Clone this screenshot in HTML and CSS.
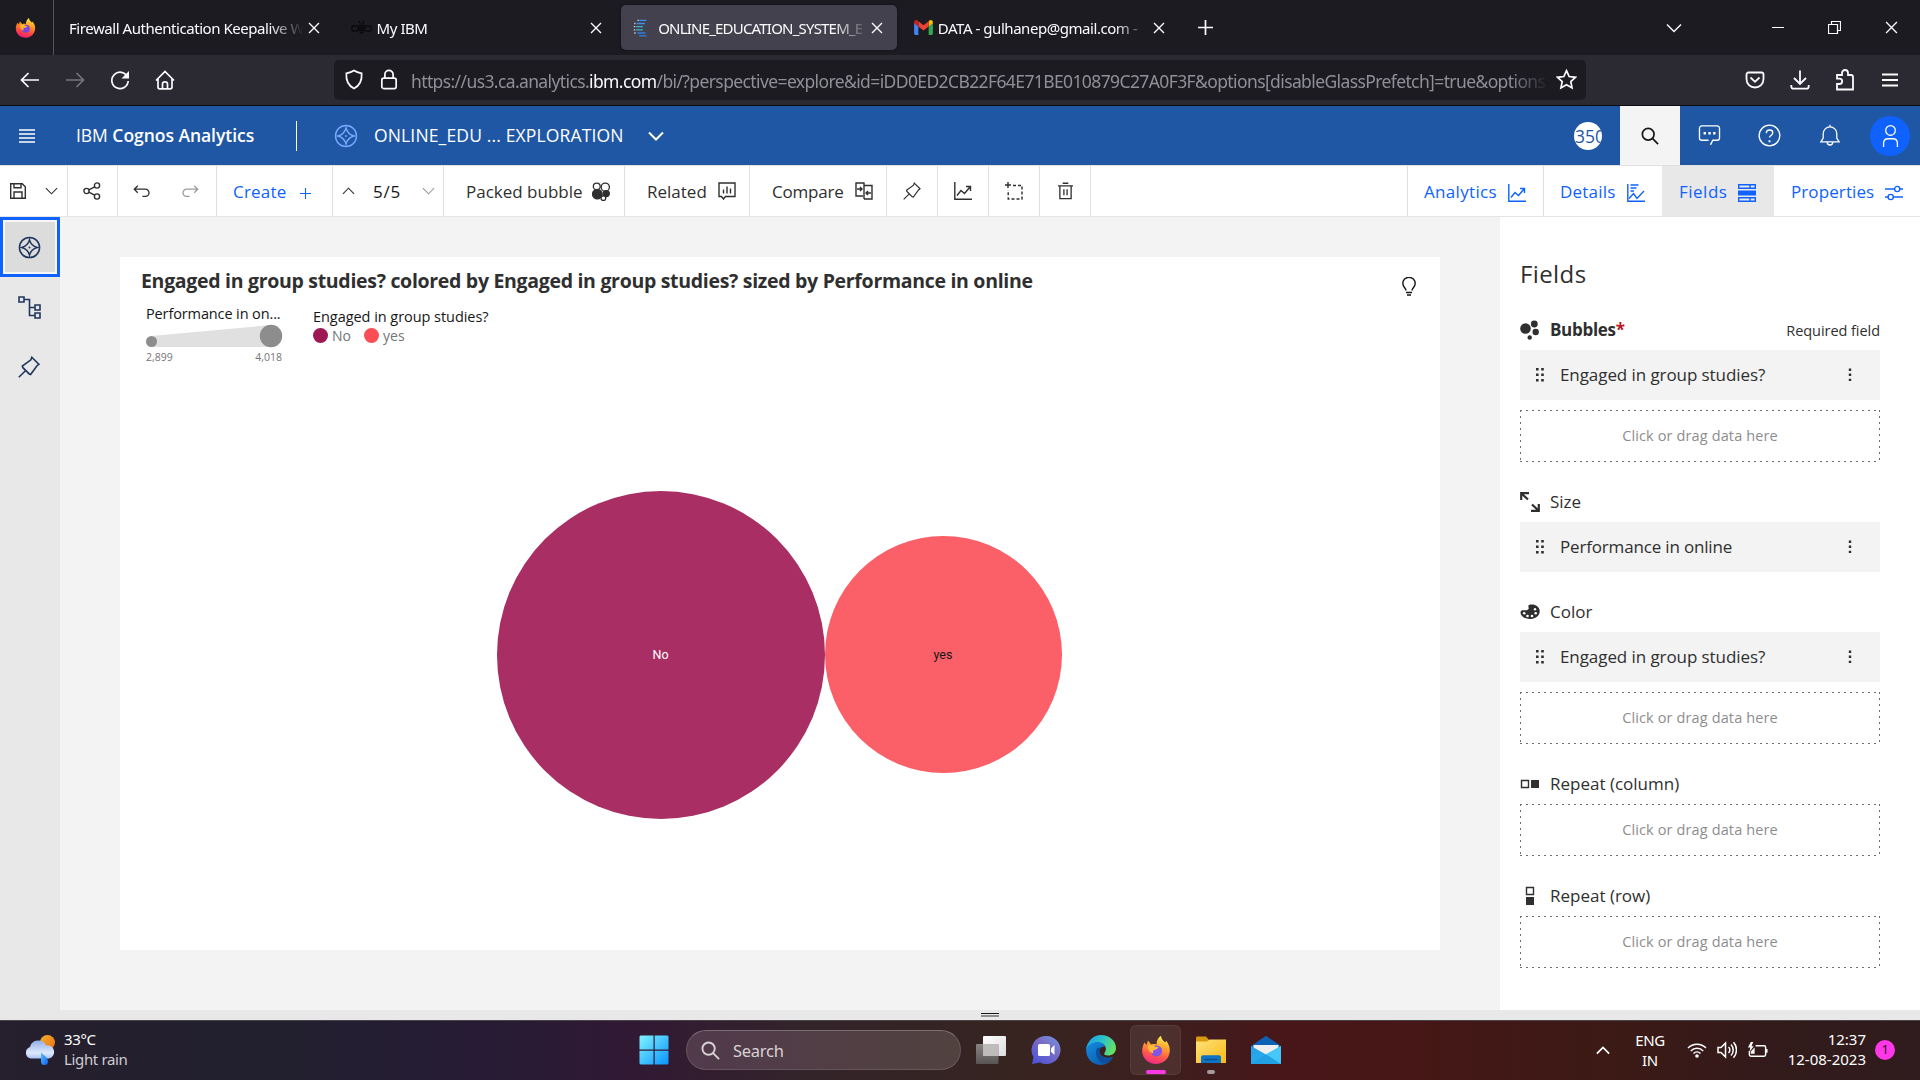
FILE: index.html
```html
<!DOCTYPE html>
<html lang="en">
<head>
<meta charset="utf-8">
<title>IBM Cognos Analytics</title>
<link rel="stylesheet" href="styles.css">
</head>
<body>
<svg class="defs" width="0" height="0" aria-hidden="true">
  <defs>
    <linearGradient id="g-ff" x1=".7" y1="0" x2=".4" y2="1"><stop offset="0" stop-color="#fff04a"/><stop offset=".35" stop-color="#ffa01e"/><stop offset=".7" stop-color="#ff4a3d"/><stop offset="1" stop-color="#f0187c"/></linearGradient>
    <radialGradient id="g-ffc"><stop offset="0" stop-color="#8a3cf0"/><stop offset="1" stop-color="#6a4ae0"/></radialGradient>
    <linearGradient id="g-win" x1="0" y1="0" x2="1" y2="1"><stop offset="0" stop-color="#7ff4ff"/><stop offset="1" stop-color="#0a93ff"/></linearGradient>
    <linearGradient id="g-chat" x1="1" y1="0" x2=".2" y2="1"><stop offset="0" stop-color="#6f9bea"/><stop offset=".45" stop-color="#7a6cc4"/><stop offset="1" stop-color="#4e55d8"/></linearGradient>
    <linearGradient id="g-edge1" x1="0" y1=".3" x2="1" y2=".6"><stop offset="0" stop-color="#1ea0e6"/><stop offset=".5" stop-color="#2cc3c8"/><stop offset="1" stop-color="#6ae35a"/></linearGradient>
    <linearGradient id="g-edge2" x1="0" y1="0" x2="1" y2="1"><stop offset="0" stop-color="#128fe6"/><stop offset="1" stop-color="#0c4f9c"/></linearGradient>
    <linearGradient id="g-fold" x1="0" y1="0" x2="1" y2="1"><stop offset="0" stop-color="#ffe27a"/><stop offset="1" stop-color="#f9b916"/></linearGradient>
    <linearGradient id="g-mail" x1="0" y1="0" x2="1" y2="1"><stop offset="0" stop-color="#2aa0e8"/><stop offset="1" stop-color="#22b2f0"/></linearGradient>
    <linearGradient id="g-cloud" x1="0" y1="0" x2="0" y2="1"><stop offset="0" stop-color="#8fb0ee"/><stop offset=".7" stop-color="#dfe9fb"/><stop offset="1" stop-color="#a9c2f2"/></linearGradient>
    <linearGradient id="g-sun" x1="0" y1="0" x2="1" y2="1"><stop offset="0" stop-color="#f3b52c"/><stop offset="1" stop-color="#ee6a12"/></linearGradient>
    <linearGradient id="g-drop" x1="0" y1="0" x2="1" y2="1"><stop offset="0" stop-color="#5cc0ff"/><stop offset="1" stop-color="#0b62f0"/></linearGradient>
    <linearGradient id="g-tv1" x1="0" y1="0" x2="1" y2="1"><stop offset="0" stop-color="#fff"/><stop offset="1" stop-color="#dcdcdc"/></linearGradient>
    <linearGradient id="g-tv2" x1="0" y1="0" x2="0" y2="1"><stop offset="0" stop-color="#8e8c8b"/><stop offset="1" stop-color="#5a5857"/></linearGradient>
  </defs>
  <symbol id="firefox" viewBox="0 0 30 30"><path fill="url(#g-ff)" d="M3.500 7.500 5.600 10 7 5.600l3.200 3.800c1.800-.6 3.800-.5 5.300 0C15.600 5.500 17.300 2.400 20 .8c.2 3 2 4.700 4 6.500.7-.3 1-.8 1.200-1.500 3.500 4.600 4.600 9.200 2.800 14.200-2 5.400-7 9-13 9C7 29 1.500 23 1.200 16.500 1 13 2 10 3.500 7.500Z"/><circle cx="15.500" cy="16" r="5.600" fill="url(#g-ffc)"/><path fill="#ffb52a" d="M7 11c2.500-1.600 5-1 7 .6 1.200.6 2.800.5 3.600.4-.8 2-2.600 2.600-4.400 3-1.800.4-1.400 2-.5 3.200C9 18 6.500 15 7 11Z"/></symbol>
  <symbol id="x" viewBox="0 0 12 12"><path d="m1 1 10 10M11 1 1 11"/></symbol>
  <symbol id="bee" viewBox="0 0 22 16"><g fill="none" stroke="#08080a" stroke-width="1.300"><ellipse cx="4" cy="9" rx="3.500" ry="3"/><ellipse cx="18" cy="9" rx="3.500" ry="3"/><path d="m8 1 2 3M14 1l-2 3"/><path stroke-width="1.800" d="M8 6h6M7.500 8.500h7M8 11h6M9 13.500h4"/></g></symbol>
  <symbol id="cog-fav" viewBox="0 0 16 20"><g stroke-width="1.500" fill="none"><path stroke="#3f8ff0" d="M6 1.500h8M3.500 5h9"/><path stroke="#35b6d8" d="M2.500 8.500H10M2.500 12H10"/><path stroke="#2f7fe0" d="M4 15.500h9M6 18.800h8"/><path stroke="#cfd6e6" stroke-dasharray="1.500 2.200" d="M4 1.500H6M.5 5h2.500M0 8.500h2M0 12h2M.5 15.500h2.500"/></g></symbol>
  <symbol id="gmail" viewBox="0 0 20 16"><path fill="#4285f4" d="M0 3v11.500c0 .8.6 1.500 1.400 1.500H4.500V7z"/><path fill="#34a853" d="M20 3v11.500c0 .8-.6 1.500-1.400 1.500H15.500V7z"/><path fill="#fbbc04" d="M15.500 1.200V7L20 3.500V2.300C20 .2 17.700-.6 16.300.6z"/><path fill="#ea4335" d="M4.500 7V1.200L10 5.500l5.500-4.300V7L10 11.300z"/><path fill="#c5221f" d="M0 2.300V3.500L4.500 7V1.200L3.700.6C2.300-.6 0 .2 0 2.300z"/></symbol>
  <symbol id="plus" viewBox="0 0 14 14"><path d="M7 0v14M0 7h14"/></symbol>
  <symbol id="chev" viewBox="0 0 16 10"><path d="m1 1.500 7 7 7-7"/></symbol>
  <symbol id="chevup" viewBox="0 0 16 10"><path d="m1 8.500 7-7 7 7"/></symbol>
  <symbol id="restore" viewBox="0 0 13 13"><path d="M.5 3.500h9v9h-9zM3.500 3.500v-3h9v9h-3"/></symbol>
  <symbol id="back" viewBox="0 0 20 16"><path d="M19 8H1.500M8.500 1l-7 7 7 7"/></symbol>
  <symbol id="fwd" viewBox="0 0 20 16"><path d="M1 8h17.500M11.500 1l7 7-7 7"/></symbol>
  <symbol id="reload" viewBox="0 0 20 20"><path d="M17.500 7A8.200 8.200 0 1 0 18.200 11"/><path fill="currentColor" stroke="none" d="M19 1v7.500h-7.500z"/></symbol>
  <symbol id="home" viewBox="0 0 20 20"><path d="M1 10.500 10 1.500l9 9M3 9v8c0 1 .6 1.800 1.800 1.800h10.400c1.200 0 1.800-.8 1.800-1.800V9M7.500 18.500V14c0-1.500 1-2.200 2.500-2.200s2.500.7 2.500 2.200v4.500"/></symbol>
  <symbol id="shield" viewBox="0 0 20 22"><path d="M10 1.500c2.500 1.700 5 2.400 8 3 .5 7-2 13-8 16-6-3-8.500-9-8-16 3-.6 5.500-1.300 8-3Z"/></symbol>
  <symbol id="lock" viewBox="0 0 18 22"><rect x="1.500" y="9.500" width="15" height="11" rx="2"/><path d="M4.700 9.500V5.800a4.300 4.300 0 0 1 8.600 0v3.700"/></symbol>
  <symbol id="star" viewBox="0 0 22 22"><path d="m11 1.800 2.800 6.100 6.600.8-4.900 4.500 1.300 6.600L11 16.500l-5.800 3.300 1.300-6.600L1.600 8.700l6.600-.8z"/></symbol>
  <symbol id="pocket" viewBox="0 0 20 18"><path d="M3.500 1.500h13c1.200 0 2 .8 2 2V8c0 5-3.800 8.500-8.500 8.500S1.500 13 1.500 8V3.500c0-1.200.8-2 2-2ZM5.500 6.500 10 10.800l4.500-4.300"/></symbol>
  <symbol id="download" viewBox="0 0 20 20"><path d="M10 .5v13M4 8l6 6 6-6M1.300 15v1.500c0 1.500.9 2.200 2.200 2.200h13c1.300 0 2.200-.7 2.200-2.200V15"/></symbol>
  <symbol id="puzzle" viewBox="0 0 20 22"><path d="M2 20.500V15h2.500a2.700 2.700 0 0 0 0-5.400H2V6h5V4a3 3 0 0 1 6 0v2h3c1.400 0 2 .8 2 2v12.500Z"/></symbol>
  <symbol id="burger3" viewBox="0 0 16 14"><path d="M0 1.500h16M0 7h16M0 12.500h16"/></symbol>
  <symbol id="burger4" viewBox="0 0 16 14"><path d="M0 1h16M0 5h16M0 9h16M0 13h16"/></symbol>
  <symbol id="compass" viewBox="0 0 24 24"><circle cx="12" cy="12" r="10.500"/><path d="M12 4c1.200 4.500 3.500 6.800 8 8-4.500 1.200-6.800 3.500-8 8-1.200-4.500-3.500-6.800-8-8 4.500-1.200 6.800-3.500 8-8Z"/><circle cx="12" cy="12" r="1" fill="currentColor" stroke="none"/></symbol>
  <symbol id="search" viewBox="0 0 20 20"><circle cx="8" cy="8" r="6.500"/><path d="m12.700 12.700 6.300 6.300"/></symbol>
  <symbol id="chat" viewBox="0 0 24 22"><path d="M13 20.800 15.500 16H20c1.500 0 2.500-1 2.500-2.500V3.500C22.500 2 21.500 1 20 1H4C2.500 1 1.500 2 1.500 3.500v10C1.500 15 2.500 16 4 16h7"/><path stroke-width="2.600" d="M5.800 8.700h2.500M10.800 8.700h2.500M15.800 8.700h2.500"/></symbol>
  <symbol id="help" viewBox="0 0 24 24"><circle cx="12" cy="12" r="10.800"/><path d="M8.700 9.600c0-2 1.400-3.300 3.400-3.300 1.900 0 3.300 1.200 3.300 2.900 0 2.700-3.400 2.700-3.400 5"/><path stroke-width="2" d="M12 17v2"/></symbol>
  <symbol id="bell" viewBox="0 0 24 26"><path d="M12 3.200V.8M2 19.500h20l-2.600-4.200V10.500a7.400 7.400 0 0 0-14.800 0v4.800zM9 19.800a3 3 0 0 0 6 0"/></symbol>
  <symbol id="user" viewBox="0 0 18 26"><circle cx="9" cy="7" r="5.200"/><path d="M1.500 25v-4c0-3 2-5 5-5h5c3 0 5 2 5 5v4"/></symbol>
  <symbol id="save" viewBox="0 0 16 16"><path d="M.7.7h11.500l3.100 3.100v11.500H.7zM4 .7v4h7v-4M4 15V9h8v6"/></symbol>
  <symbol id="share" viewBox="0 0 18 18"><circle cx="3.500" cy="9" r="2.600"/><circle cx="14" cy="3.500" r="2.600"/><circle cx="14" cy="14.500" r="2.600"/><path d="m5.800 7.800 5.900-3M5.800 10.200l5.900 3"/></symbol>
  <symbol id="undo" viewBox="0 0 18 14"><path d="M5 .8 1.200 4.500 5 8.300M1.200 4.500h12a3.600 3.600 0 0 1 0 7.800H10"/></symbol>
  <symbol id="redo" viewBox="0 0 18 14"><path d="m13 .8 3.800 3.700L13 8.300M16.800 4.500h-12a3.600 3.600 0 0 0 0 7.800H8"/></symbol>
  <symbol id="packed" viewBox="0 0 20 20"><circle cx="5" cy="4.700" r="3.600" fill="none"/><circle cx="14" cy="5.500" r="4.300" fill="none"/><circle cx="5.600" cy="12.800" r="5" fill="currentColor"/><circle cx="15" cy="12.200" r="3.200" fill="currentColor"/><circle cx="12" cy="17" r="2.500" fill="#fff"/></symbol>
  <symbol id="related" viewBox="0 0 18 18"><path d="M1 1h16v13.500H7.500L5.500 17l-2-2.500H1zM5.500 11.500v-4M9 11.500V4.500M12.500 11.500v-5"/></symbol>
  <symbol id="compare" viewBox="0 0 18 18"><path d="M8 14H1V1h8v16M9 3.500h8V17H9M2 7h5M5 5l2 2-2 2M16 11h-5M13 9l-2 2 2 2"/></symbol>
  <symbol id="pin" viewBox="0 0 22 22"><path d="m13.800 1.300 7 7-1.800 1.400-6.400 8.800-1.200-.4-6.500-6.500-.6-1.500 8.600-6.300zM8 14.200.8 21.300M4.300 11.200l7.300 7.300"/></symbol>
  <symbol id="line" viewBox="0 0 18 18"><path d="M.8 0v17.200H18M3 13.500 7 8.500l3.500 3 5.500-6.500M12 4.500h4.500V9"/></symbol>
  <symbol id="crop" viewBox="0 0 18 18"><path d="M3 0v6M0 3h6"/><path stroke-dasharray="3 2" d="M8 3.500h9v13.500H3.200V8"/></symbol>
  <symbol id="trash" viewBox="0 0 16 18"><path d="M0 3.500h16M2 3.500v13.700h12V3.500M5 .7h6M6.300 7v6.500M9.700 7v6.500"/></symbol>
  <symbol id="details" viewBox="0 0 18 18"><path d="M.8 0v17.200H18M2 14.500l4.500-5 3.500 5 7-7.500M3.500 1h8M3.500 4h6M3.500 7h3.500"/></symbol>
  <symbol id="fields" viewBox="0 0 18 18"><path d="M.7.7h16.600v3.600H.7zM.7 13.700h16.600v3.600H.7zM12 .7v3.600M12 13.700v3.600"/><path fill="currentColor" stroke="none" d="M0 6.500h18v5H0z"/></symbol>
  <symbol id="sliders" viewBox="0 0 18 16"><path d="M0 4h9.500M15 4h3M0 12h3M8.500 12H18"/><circle cx="12.200" cy="4" r="2.600"/><circle cx="5.700" cy="12" r="2.600"/></symbol>
  <symbol id="tree" viewBox="0 0 23 23"><path d="M1 1h5v5H1zM17 9h5v5h-5zM17 17h5v5h-5zM6 3.500h5.500v16H17M11.500 11.500H17"/></symbol>
  <symbol id="bulb" viewBox="0 0 14 19"><path d="M4 13.500c0-2.300-3.200-3.500-3.200-7a6.200 6.200 0 0 1 12.400 0c0 3.500-3.200 4.700-3.200 7M4 15.500h6M5 18h4"/></symbol>
  <symbol id="bubbles" viewBox="0 0 20 20"><g fill="currentColor" stroke="none"><circle cx="5.500" cy="8.500" r="5.300"/><circle cx="14.300" cy="4" r="3.400"/><circle cx="15.700" cy="12" r="3.200"/><circle cx="9.700" cy="17.500" r="2.200"/></g></symbol>
  <symbol id="size" viewBox="0 0 20 20"><path stroke-width="2.200" d="m1.500 1.500 6.500 6M1.200 8V1.200H9M18.500 18.500l-6.500-6M18.800 12v6.800H11"/></symbol>
  <symbol id="palette" viewBox="0 0 20 16"><path fill="currentColor" stroke="none" d="M9 1c5-1.500 10.500 1 10.700 6 .1 5-5 8-10 8C4.500 15 .5 12 .5 8.500c0-1.500.8-2.500 2.200-2.300C5 6.500 8 6.500 8.700 4.500 9 3.500 7.500 2 9 1Z"/><g fill="#fff" stroke="none"><circle cx="4.200" cy="9.300" r="1.300"/><circle cx="7.500" cy="12" r="1.300"/><circle cx="12" cy="12" r="1.300"/><circle cx="15.700" cy="9.300" r="1.300"/><circle cx="15" cy="5.300" r="1.200"/></g></symbol>
  <symbol id="repcol" viewBox="0 0 20 20"><path d="M1.500 6.500h7v7h-7z"/><path fill="currentColor" stroke="none" d="M11 6h8v8h-8z"/></symbol>
  <symbol id="reprow" viewBox="0 0 20 20"><path d="M6.500 1.500h7v7h-7z"/><path fill="currentColor" stroke="none" d="M6 11h8v8H6z"/></symbol>
  <symbol id="drag" viewBox="0 0 8 14"><path fill="currentColor" stroke="none" d="M0 0h2.600v2.600H0zM5.200 0h2.600v2.600H5.200zM0 5.500h2.600v2.600H0zM5.200 5.500h2.600v2.600H5.200zM0 11h2.600v2.600H0zM5.200 11h2.600v2.600H5.200z"/></symbol>
  <symbol id="kebab" viewBox="0 0 4 14"><path fill="currentColor" stroke="none" d="M.8.5h2.400v2.400H.8zM.8 5.600h2.400V8H.8zM.8 10.700h2.400v2.400H.8z"/></symbol>
  <symbol id="weather" viewBox="0 0 32 32"><circle cx="23.500" cy="8.500" r="7.500" fill="url(#g-sun)"/><path fill="url(#g-cloud)" d="M6.500 24.500A6 6 0 0 1 6 13a8.500 8.500 0 0 1 16-1.500 6.500 6.500 0 0 1 3 13z"/><path fill="url(#g-drop)" d="M17 18.500c3.500 3 7 5.500 7 9a3.500 3.500 0 0 1-7 0z"/></symbol>
  <symbol id="windows" viewBox="0 0 30 30"><path fill="url(#g-win)" d="M1.500.5h13v14h-14v-13zM15.700.5H28.500l1 1v13H15.700zM.5 15.700h14v13.800h-13l-1-1zM15.700 15.700h13.800v12.800l-1 1H15.700z"/></symbol>
  <symbol id="taskview" viewBox="0 0 30 30"><rect x="7" y="1" width="23" height="20" rx="1" fill="url(#g-tv1)"/><rect x="0" y="9" width="22.500" height="20" rx="1" fill="url(#g-tv2)" opacity=".93"/><path fill="#bdbcbb" d="M7 9h15.500v12H7z"/></symbol>
  <symbol id="meet" viewBox="0 0 30 30"><path fill="url(#g-chat)" d="M15.500 1A14 14 0 1 1 9 27.400L1 29l1.500-7A14 14 0 0 1 15.500 1Z"/><rect x="7" y="9" width="12" height="12" rx="1.500" fill="#fff"/><path fill="#fff" d="M20 13.500 23.500 10v10L20 16.700z"/></symbol>
  <symbol id="edge" viewBox="0 0 30 30"><path fill="url(#g-edge2)" d="M.2 15C.5 8 6 5 11 6c6 1.200 8 4 8 6-4-1-6 2-5.500 5 .6 4 5 7 13.500 5C24.500 27 20 30 15 30 6.500 30 0 23.500.2 15Z"/><path fill="#0d4f9d" d="M11 13c-2.500 6 0 13.500 7 15.500 4-.5 7.500-3.500 9-6.500-7 2.500-12.500.5-13.500-5-.3-2 .5-3.500 1.500-4.500z"/><path fill="url(#g-edge1)" d="M.2 14.500C1 6 7.500 0 15 0c8.500 0 15 6 15 13 0 5-4 7.500-8 7.500-2.500 0-4.200-1-3.700-2.300 1-2 2-2.700 1.500-5.200C18.500 5.500 5 4 .2 14.500Z"/></symbol>
  <symbol id="folder" viewBox="0 0 30 30"><path fill="#d79a0c" d="M0 3c0-1 .5-1.500 1.500-1.500H10L13 5v4H0z"/><path fill="url(#g-fold)" d="M0 6.500h11L13.500 4.500H30V28H0z"/><path fill="#0f73c4" d="M5 28v-5.500C5 21 6 20.300 7 20.300h16c1.200 0 2 .8 2 2.200V28z"/><path stroke="#0a4f8c" stroke-width="1.300" d="M8.500 24.500h13"/></symbol>
  <symbol id="mail" viewBox="0 0 30 30"><path fill="#0c62b4" d="M0 11 15 .8 30 11v3H0z"/><path fill="#efefef" d="M2.500 10h25v11h-25z"/><path fill="url(#g-mail)" d="M0 11l15 8.500L30 11v18H0z"/><path fill="#45c8f8" d="m15 19.500 15-8.500v18z"/><path fill="#1f93dc" d="m0 29 15-9.500L30 29z" opacity=".5"/></symbol>
  <symbol id="wifi" viewBox="0 0 20 16"><path d="M1 6a12.500 12.500 0 0 1 18 0M3.800 9a8.500 8.500 0 0 1 12.400 0M6.500 11.500a5 5 0 0 1 7 0"/><circle cx="10" cy="14" r="1.800" fill="currentColor" stroke="none"/></symbol>
  <symbol id="vol" viewBox="0 0 20 18"><path d="M1 6.500h3L8.500 2v14L4 11.500H1zM11.500 6a4 4 0 0 1 0 6M14 3.500a8 8 0 0 1 0 11M16.500 1.300a11.500 11.500 0 0 1 0 15.400"/></symbol>
  <symbol id="batt" viewBox="0 0 22 18"><path d="M9 4.500h9c1 0 1.500.5 1.500 1.500v8c0 1-.5 1.500-1.500 1.500H4c-1 0-1.500-.5-1.500-1.500V10"/><path fill="currentColor" stroke="none" d="M19.500 8H21.500v4h-2zM4 .5 1 6.500h2.500L2.500 11 7 5H4.700L6.500.5zM8 6.500V13H4v-2.500z"/></symbol>
</svg>

<div class="screen">
  <header class="tabs">
    <div class="tabs-fx"><svg width="21" height="22"><use href="#firefox"/></svg></div>
    <div class="tab"><span class="tab-text">Firewall Authentication Keepalive W</span><svg class="ic" width="12" height="12"><use href="#x"/></svg></div>
    <div class="tab"><svg width="21" height="15"><use href="#bee"/></svg><span class="tab-text">My IBM</span><svg class="ic" width="12" height="12"><use href="#x"/></svg></div>
    <div class="tab active"><svg width="16" height="18"><use href="#cog-fav"/></svg><span class="tab-text">ONLINE_EDUCATION_SYSTEM_E</span><svg class="ic" width="12" height="12"><use href="#x"/></svg></div>
    <div class="tab"><svg width="19" height="15"><use href="#gmail"/></svg><span class="tab-text">DATA - gulhanep@gmail.com -</span><svg class="ic" width="12" height="12"><use href="#x"/></svg></div>
    <svg class="ic newtab" width="15" height="15"><use href="#plus"/></svg>
    <div class="win">
      <span class="win-b list"><svg class="ic" width="16" height="10"><use href="#chev"/></svg></span>
      <span class="win-b"><i class="minimize"></i></span>
      <span class="win-b"><svg class="ic thin" width="13" height="13"><use href="#restore"/></svg></span>
      <span class="win-b"><svg class="ic thin" width="13" height="13"><use href="#x"/></svg></span>
    </div>
  </header>

  <nav class="nav">
    <svg class="ic" width="20" height="16"><use href="#back"/></svg>
    <svg class="ic dim" width="20" height="16"><use href="#fwd"/></svg>
    <svg class="ic" width="20" height="20"><use href="#reload"/></svg>
    <svg class="ic" width="20" height="20"><use href="#home"/></svg>
    <div class="url">
      <svg class="ic" width="20" height="21"><use href="#shield"/></svg>
      <svg class="ic lock" width="18" height="21"><use href="#lock"/></svg>
      <span class="url-text">https://us3.ca.analytics.<b>ibm.com</b>/bi/?perspective=explore&amp;id=iDD0ED2CB22F64E71BE010879C27A0F3F&amp;options[disableGlassPrefetch]=true&amp;options</span>
      <svg class="ic" width="21" height="21"><use href="#star"/></svg>
    </div>
    <div class="nav-right">
      <svg class="ic" width="20" height="18"><use href="#pocket"/></svg>
      <svg class="ic" width="20" height="20"><use href="#download"/></svg>
      <svg class="ic" width="20" height="22"><use href="#puzzle"/></svg>
      <svg class="ic last" width="16" height="14"><use href="#burger3"/></svg>
    </div>
  </nav>

  <div class="bar">
    <svg class="ic menu" width="16" height="14"><use href="#burger4"/></svg>
    <span class="brand">IBM <b>Cognos Analytics</b></span>
    <i class="bar-sep"></i>
    <svg class="ic logo" width="24" height="24"><use href="#compass"/></svg>
    <span class="doc">ONLINE_EDU ... EXPLORATION</span>
    <svg class="ic docchev" width="16" height="10"><use href="#chev"/></svg>
    <div class="bar-right">
      <span class="count">350</span>
      <span class="bar-b find"><svg class="ic" width="18" height="18"><use href="#search"/></svg></span>
      <span class="bar-b"><svg class="ic" width="23" height="21"><use href="#chat"/></svg></span>
      <span class="bar-b"><svg class="ic" width="23" height="23"><use href="#help"/></svg></span>
      <span class="bar-b"><svg class="ic" width="22" height="24"><use href="#bell"/></svg></span>
      <span class="bar-b me"><span class="avatar"><svg class="ic" width="17" height="24"><use href="#user"/></svg></span></span>
    </div>
  </div>

  <div class="tools">
    <div class="cell c-save"><svg class="ic" width="16" height="16"><use href="#save"/></svg><svg class="ic" width="13" height="8"><use href="#chev"/></svg></div>
    <div class="cell c-share"><svg class="ic" width="18" height="18"><use href="#share"/></svg></div>
    <div class="cell c-undo"><svg class="ic" width="17" height="13"><use href="#undo"/></svg><svg class="ic faint" width="17" height="13"><use href="#redo"/></svg></div>
    <div class="cell c-create blue"><span class="w-create">Create</span><svg class="ic" width="11" height="11"><use href="#plus"/></svg></div>
    <div class="cell c-page"><svg class="ic" width="13" height="8"><use href="#chevup"/></svg><span class="w-page">5/5</span><svg class="ic faint" width="13" height="8"><use href="#chev"/></svg></div>
    <div class="cell c-packed"><span class="w-packed">Packed bubble</span><svg class="ic" width="19" height="19"><use href="#packed"/></svg></div>
    <div class="cell c-related"><span class="w-related">Related</span><svg class="ic" width="18" height="18"><use href="#related"/></svg></div>
    <div class="cell c-compare"><span class="w-compare">Compare</span><svg class="ic" width="18" height="18"><use href="#compare"/></svg></div>
    <div class="cell c-icon"><svg class="ic" width="18" height="18"><use href="#pin"/></svg></div>
    <div class="cell c-icon"><svg class="ic" width="18" height="18"><use href="#line"/></svg></div>
    <div class="cell c-icon"><svg class="ic" width="18" height="18"><use href="#crop"/></svg></div>
    <div class="cell c-icon"><svg class="ic" width="15" height="18"><use href="#trash"/></svg></div>
    <div class="tools-right blue">
      <div class="cell r-analytics"><span class="w-analytics">Analytics</span><svg class="ic" width="18" height="18"><use href="#line"/></svg></div>
      <div class="cell r-details"><span class="w-details">Details</span><svg class="ic" width="18" height="18"><use href="#details"/></svg></div>
      <div class="cell r-fields"><span class="w-fields">Fields</span><svg class="ic" width="18" height="18"><use href="#fields"/></svg></div>
      <div class="cell r-props"><span class="w-props">Properties</span><svg class="ic" width="18" height="16"><use href="#sliders"/></svg></div>
    </div>
  </div>

  <main class="work">
    <aside class="rail">
      <div class="rail-b sel"><svg class="ic" width="23" height="23"><use href="#compass"/></svg></div>
      <div class="rail-b"><svg class="ic" width="23" height="23"><use href="#tree"/></svg></div>
      <div class="rail-b"><svg class="ic" width="22" height="22"><use href="#pin"/></svg></div>
    </aside>
    <section class="stage">
      <article class="card">
        <div class="card-head">
          <h1>Engaged in group studies? colored by Engaged in group studies? sized by Performance in online</h1>
          <svg class="ic bulb" width="14" height="19"><use href="#bulb"/></svg>
        </div>
        <div class="legends">
          <div class="lg-size">
            <div class="lg-title">Performance in on...</div>
            <svg width="138" height="24" viewBox="0 0 138 24"><path fill="#e0e0e0" d="M5 12 125 1v22H5z"/><circle cx="5.500" cy="17.500" r="5.500" fill="#8d8d8d"/><circle cx="125" cy="12" r="11.200" fill="#8d8d8d"/></svg>
            <div class="lg-nums"><span>2,899</span><span>4,018</span></div>
          </div>
          <div class="lg-color">
            <div class="lg-title">Engaged in group studies?</div>
            <div class="lg-items"><i class="dot no"></i><span class="lg-no">No</span><i class="dot yes"></i><span>yes</span></div>
          </div>
        </div>
        <div class="plot">
          <div class="bubble b-no">No</div><div class="bubble b-yes">yes</div>
        </div>
      </article>
    </section>
    <aside class="panel">
      <h2>Fields</h2>
      <div class="slot"><svg class="ic" width="20" height="20"><use href="#bubbles"/></svg><strong>Bubbles<em>*</em></strong><small>Required field</small></div>
      <div class="field"><svg class="ic" width="8" height="14"><use href="#drag"/></svg><span class="name">Engaged in group studies?</span><svg class="ic" width="4" height="14"><use href="#kebab"/></svg></div>
      <div class="drop">Click or drag data here</div>
      <div class="slot"><svg class="ic" width="20" height="20"><use href="#size"/></svg><span>Size</span></div>
      <div class="field"><svg class="ic" width="8" height="14"><use href="#drag"/></svg><span class="name tight">Performance in online</span><svg class="ic" width="4" height="14"><use href="#kebab"/></svg></div>
      <div class="slot"><svg class="ic" width="20" height="16"><use href="#palette"/></svg><span>Color</span></div>
      <div class="field"><svg class="ic" width="8" height="14"><use href="#drag"/></svg><span class="name">Engaged in group studies?</span><svg class="ic" width="4" height="14"><use href="#kebab"/></svg></div>
      <div class="drop">Click or drag data here</div>
      <div class="slot"><svg class="ic" width="20" height="20"><use href="#repcol"/></svg><span>Repeat (column)</span></div>
      <div class="drop">Click or drag data here</div>
      <div class="slot"><svg class="ic" width="20" height="20"><use href="#reprow"/></svg><span>Repeat (row)</span></div>
      <div class="drop">Click or drag data here</div>
    </aside>
  </main>

  <div class="grip"><i></i></div>

  <footer class="task">
    <div class="weather"><svg width="32" height="32"><use href="#weather"/></svg><div class="w-text"><div>33°C</div><div class="soft">Light rain</div></div></div>
    <div class="apps">
      <span class="app"><svg width="30" height="30"><use href="#windows"/></svg></span>
      <div class="find-box"><svg class="ic" width="19" height="19"><use href="#search"/></svg><span>Search</span></div>
      <span class="app"><svg width="30" height="30"><use href="#taskview"/></svg></span>
      <span class="app"><svg width="30" height="30"><use href="#meet"/></svg></span>
      <span class="app"><svg width="30" height="30"><use href="#edge"/></svg></span>
      <span class="app on"><svg width="30" height="30"><use href="#firefox"/></svg></span>
      <span class="app run"><svg width="30" height="30"><use href="#folder"/></svg></span>
      <span class="app"><svg width="30" height="30"><use href="#mail"/></svg></span>
    </div>
    <div class="tray">
      <svg class="ic up" width="14" height="9"><use href="#chevup"/></svg>
      <div class="lang"><div>ENG</div><div>IN</div></div>
      <svg class="ic" width="20" height="16"><use href="#wifi"/></svg>
      <svg class="ic" width="20" height="18"><use href="#vol"/></svg>
      <svg class="ic" width="21" height="18"><use href="#batt"/></svg>
      <div class="clock"><div>12:37</div><div>12-08-2023</div></div>
      <span class="badge">1</span>
    </div>
  </footer>
</div>
</body>
</html>
```
FILE: styles.css
```css
:root {
  --ui: "Noto Sans", sans-serif;
  --app: "Open Sans", sans-serif;
  --blue: #0f62fe;
  --ink: #2f2f2f;
}
* { box-sizing: border-box; }
body { margin: 0; background: #1c1b22; overflow: hidden; }
h1, h2 { margin: 0; font-weight: inherit; }
em, i { font-style: normal; }
svg { flex: none; display: block; }
.defs { position: absolute; }
.ic { fill: none; stroke: currentColor; stroke-width: 1.4; }
.screen { width: 1920px; height: 1080px; display: flex; flex-direction: column; white-space: nowrap; }

/* browser tabs */
.tabs { height: 55px; flex: none; display: flex; align-items: center; background: #1c1b22; color: #fbfbfe; font: 15px/20px var(--ui); letter-spacing: -.45px; }
.tabs-fx { width: 54px; height: 55px; border-right: 1px solid #55545c; display: flex; align-items: center; padding-left: 15px; margin-right: 4px; }
.tab { width: 276px; height: 45px; margin-right: 5.6px; border-radius: 5px; padding: 0 14px 0 11px; display: flex; align-items: center; gap: 5px; }
.tab.active { background: #42414d; box-shadow: 0 0 3px rgba(0, 0, 0, .5); padding-left: 12px; gap: 9px; letter-spacing: -.8px; }
.tab-text { flex: 1; overflow: hidden; -webkit-mask-image: linear-gradient(to left, transparent, #000 34px); mask-image: linear-gradient(to left, transparent, #000 34px); }
.active .tab-text { margin-right: -6px; }
.newtab { margin-left: 14px; stroke-width: 1.6; }
.win { margin-left: auto; display: flex; }
.win-b { width: 57px; display: flex; justify-content: center; align-items: center; }
.win-b.list { margin-right: 47px; stroke-width: 1.6; }
.thin { stroke-width: 1.2; }
.minimize { width: 12px; height: 1px; background: #fff; }

/* address row */
.nav { height: 51px; flex: none; display: flex; align-items: center; padding: 0 22px 1px 20px; background: #2b2a33; border-bottom: 1px solid #0c0c0d; color: #fbfbfe; }
.nav > .ic { margin-right: 25px; stroke-width: 1.7; }
.nav .dim { color: #76757c; }
.url { width: 1252px; height: 40px; margin-left: 134px; border-radius: 5px; background: #1c1b22; display: flex; align-items: center; padding: 0 9px 0 10px; }
.lock { margin: 0 13px 0 16px; }
.url .ic, .nav-right .ic { stroke-width: 1.8; }
.url-text { width: 1138px; margin-right: auto; overflow: hidden; font: 17.5px/24px var(--ui); letter-spacing: -.61px; color: #8f8f96; padding-top: 2px; -webkit-mask-image: linear-gradient(to left, transparent, #000 40px); mask-image: linear-gradient(to left, transparent, #000 40px); }
.url-text b { font-weight: 400; color: #fbfbfe; }
.nav-right { margin-left: auto; display: flex; align-items: center; gap: 25px; }
.nav-right .last { margin-left: 2px; }

/* application header */
.bar { height: 59px; flex: none; display: flex; align-items: center; background: #1f57a4; color: #fff; font: 17.5px/24px var(--app); padding-left: 19px; }
.menu { margin-right: 41px; }
.brand { width: 220px; letter-spacing: -.04px; padding-bottom: 1px; }
.brand b { font-weight: 600; }
.bar-sep { width: 1px; height: 30px; background: #fff; margin-right: 37px; }
.logo { color: #78a9ff; margin-right: 16px; }
.doc { width: 274px; letter-spacing: .15px; padding-bottom: 1px; }
.docchev { stroke-width: 2; }
.bar-right { margin-left: auto; display: flex; align-items: center; }
.count { width: 28px; height: 28px; border-radius: 50%; background: #fff; color: #1f57a4; overflow: hidden; display: flex; align-items: center; padding-left: 1px; margin-right: 18px; }
.bar-b { width: 60px; height: 59px; display: flex; align-items: center; justify-content: center; padding-right: 1px; }
.bar-b.me { padding: 0; }
.bar-b.find { background: #f4f4f4; color: #161616; padding: 0; }
.find .ic { stroke-width: 1.9; }
.avatar { width: 40px; height: 40px; border-radius: 50%; background: var(--blue); display: flex; align-items: center; justify-content: center; }

/* toolbar */
.tools { height: 52px; flex: none; display: flex; border-top: 1px solid #e0e0e0; border-bottom: 1px solid #e5e5e5; background: #fff; color: var(--ink); font: 17px/24px var(--app); }
.cell { height: 50px; display: flex; align-items: center; border-right: 1px solid #e0e0e0; }
.cell span { padding-top: 2px; }
.faint { color: #9b9b9b; }
.blue { color: var(--blue); }
.c-save { width: 68px; padding-left: 10px; gap: 19px; }
.c-share { width: 50px; padding-left: 15px; }
.c-undo { width: 99px; padding-left: 15px; gap: 32px; }
.c-create { width: 116px; padding-left: 16px; }
.w-create { width: 67px; letter-spacing: .2px; }
.c-create .ic { margin-top: 4px; }
.c-page { width: 111px; padding-left: 9px; }
.w-page { width: 49px; margin-left: 18px; color: #161616; letter-spacing: .8px; }
.c-packed { width: 181px; padding-left: 22px; }
.w-packed { width: 126px; }
.c-related { width: 125px; padding-left: 22px; }
.w-related { width: 71px; }
.c-compare { width: 137px; padding-left: 22px; }
.w-compare { width: 83px; letter-spacing: -.2px; }
.c-icon { width: 51px; justify-content: center; }
.tools-right { margin-left: auto; width: 513px; display: flex; border-left: 1px solid #e0e0e0; letter-spacing: .2px; }
.tools-right .ic { margin-top: 4px; }
.r-analytics { width: 136px; padding-left: 16px; }
.w-analytics { width: 84px; letter-spacing: .32px; }
.r-details { width: 118px; padding-left: 16px; border-right: 0; }
.w-details { width: 67px; }
.r-fields { width: 112px; padding-left: 17px; background: #e8e8e8; border-right: 0; }
.w-fields { width: 59px; letter-spacing: .5px; }
.r-props { width: 146px; padding-left: 17px; border-right: 0; }
.w-props { width: 94px; letter-spacing: .1px; }

/* workspace */
.work { height: 793px; flex: none; display: flex; background: #f3f3f3; }
.rail { width: 60px; background: #e8e8e8; color: #20365e; }
.rail-b { height: 60px; display: flex; align-items: center; padding-left: 18px; }
.rail-b.sel { padding-left: 15px; border: 3px solid var(--blue); background: #dcdcdc; box-shadow: inset 0 0 0 2px #f6f6f6; }
.rail .ic { stroke-width: 1.6; }
.stage { width: 1440px; padding: 40px 60px 0; }
.card { height: 693px; background: #fff; padding: 8px 0 0 21px; display: flex; flex-direction: column; font-family: var(--app); }
.card-head { height: 40px; display: flex; }
h1 { font: 700 19.5px/32px var(--app); letter-spacing: -.305px; color: #2f2f2f; width: 1261px; }
.bulb { margin-top: 12px; color: #161616; }
.legends { display: flex; padding-left: 5px; height: 70px; }
.lg-title { font-size: 14.5px; line-height: 20px; height: 19px; color: #161616; letter-spacing: -.05px; }
.lg-size { width: 167px; display: flex; flex-direction: column; }
.lg-size .lg-title { line-height: 18px; letter-spacing: -.12px; }
.lg-nums { width: 136px; display: flex; justify-content: space-between; font-size: 10.5px; line-height: 18px; color: #757575; }
.lg-color { padding-top: 2px; }
.lg-items { display: flex; align-items: center; font-size: 14px; line-height: 19px; color: #757575; }
.dot { width: 15px; height: 15px; border-radius: 50%; margin-right: 4px; }
.dot.no { background: #9f1853; }
.dot.yes { background: #fa4d56; }
.lg-no { width: 32px; }
.plot { flex: 1; padding-left: 355.500px; padding-bottom: 16px; display: flex; align-items: center; font: 400 12.5px/16px Roboto, sans-serif; }
.bubble { border-radius: 50%; display: flex; align-items: center; justify-content: center; }
.b-no { width: 328px; height: 328px; background: #a82e63; color: #fff; }
.b-yes { width: 237px; height: 237px; background: #fb5f67; color: #161616; }

/* fields panel */
.panel { width: 420px; background: #fff; padding: 38px 40px 0 20px; font: 17px/24px var(--app); color: var(--ink); }
h2 { font-size: 24px; line-height: 38px; height: 55px; letter-spacing: .4px; }
.slot { height: 40px; display: flex; align-items: center; gap: 10px; }
.slot strong { font-weight: 700; letter-spacing: -.3px; }
.slot em { color: #b81921; }
.slot small { margin-left: auto; font-size: 14.5px; letter-spacing: -.05px; padding-top: 1px; }
.field { height: 50px; background: #f3f3f3; display: flex; align-items: center; padding-left: 16px; margin-bottom: 20px; }
.field + .drop { margin-top: -10px; }
.name { width: 288px; margin-left: 16px; letter-spacing: -.08px; }
.name.tight { letter-spacing: -.17px; }
.drop { --d: linear-gradient(90deg, #6f6f6f 2px, transparent 2px); --v: linear-gradient(#6f6f6f 2px, transparent 2px); height: 52px; margin-bottom: 20px; display: flex; align-items: center; justify-content: center; font-size: 14.5px; letter-spacing: .13px; color: #8d8d8d;
  background: var(--d) 0 0 / 6px 1px repeat-x, var(--d) 0 100% / 6px 1px repeat-x, var(--v) 0 0 / 1px 6px repeat-y, var(--v) 100% 0 / 1px 6px repeat-y; }
.grip { height: 10px; flex: none; background: #e8e8e8; display: flex; align-items: center; justify-content: center; padding-left: 60px; }
.grip i { width: 18px; height: 4px; border-top: 1px solid #161616; border-bottom: 2px solid #8d8d8d; }

/* taskbar */
.task { height: 60px; flex: none; display: flex; align-items: center; padding-bottom: 1px; border-top: 1px solid #4a4548; color: #fff; font: 15px/20px var(--ui); letter-spacing: -.35px;
  background: linear-gradient(90deg, #261f2d 0, #22202f 14%, #251c34 24%, #311934 33%, #33242a 42%, #362421 52%, #3c201e 60%, #481619 67%, #461716 73%, #3c1a16 84%, #331a1a 92%, #2f1c1e 100%); }
.weather { width: 626px; display: flex; align-items: center; gap: 8px; padding-left: 24px; }
.w-text { margin-bottom: 3px; }
.soft { color: #d0ccd2; }
.apps { display: flex; align-items: center; }
.app { width: 55px; height: 50px; position: relative; display: flex; align-items: center; justify-content: center; }
.find-box { width: 275px; height: 40px; margin: 0 2px 0 5px; border-radius: 20px; border: 1px solid rgba(255, 255, 255, .12); border-top-color: rgba(255, 255, 255, .25); background: linear-gradient(90deg, #513a4c, #51423f); display: flex; align-items: center; gap: 13px; padding-left: 14px; font-size: 16.5px; letter-spacing: -.25px; color: #d8d2d4; }
.find-box span { padding-top: 1px; }
.find-box .ic { stroke-width: 2; }
.app.on::before { content: ""; position: absolute; inset: 0 2px; border-radius: 6px; border: 1px solid rgba(255, 255, 255, .06); background: rgba(255, 255, 255, .08); }
.app.on::after, .app.run::after { content: ""; position: absolute; bottom: 1px; height: 4px; border-radius: 2px; }
.app.on::after { width: 20px; background: #ff37e6; }
.app.run::after { width: 8px; background: #a79a9c; }
.tray { margin-left: auto; display: flex; align-items: center; padding-right: 25px; }
.tray .ic { stroke-width: 1.5; margin-right: 10px; }
.tray .up { margin-right: 20px; stroke-width: 2; }
.lang { width: 40px; text-align: center; margin: 0 17px 1px 0; }
.clock { width: 88px; text-align: right; margin: 0 9px 2px 0; letter-spacing: 0; }
.badge { width: 20px; height: 20px; border-radius: 50%; background: #ff37e6; color: #1c1020; font-size: 12px; line-height: 20px; text-align: center; }
```
